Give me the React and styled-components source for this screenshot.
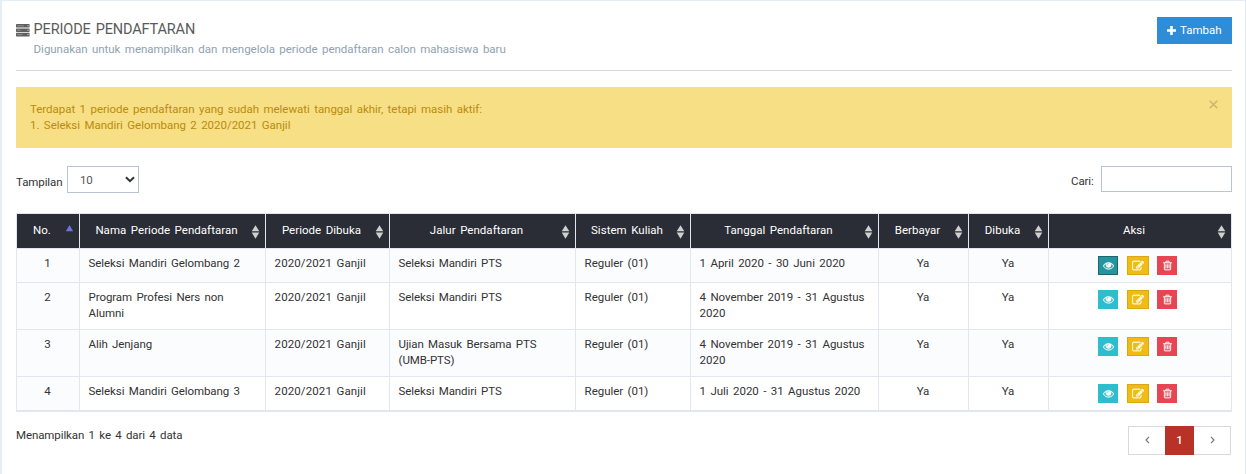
import React from 'react';
import styled, { createGlobalStyle, css } from 'styled-components';

const Global = createGlobalStyle`
  *, *::before, *::after { box-sizing: border-box; }
  body {
    margin: 0;
    background: #e5edf7;
    color: #333;
    font: 400 11.5px/16px Roboto, "Liberation Sans", sans-serif;
    letter-spacing: -.1px;
    word-spacing: 1.6px;
  }
`;

const Panel = styled.main`
  height: 473px;
  margin: 1px 1px 0 2px;
  padding: 14px 13px 0 14px;
  background: #fff;
`;

const Header = styled.header`
  display: flex;
  justify-content: space-between;
  align-items: flex-start;
  height: 56px;
  border-bottom: 1px solid #d8d8d8;
`;

const Heading = styled.div`
  display: grid;
  grid-template-columns: 17.6px auto;
  align-items: center;

  > svg { margin-top: 2px; }
`;

const Title = styled.h1`
  margin: 1px 0 0;
  color: #5a5a5a;
  font-size: 14.5px;
  font-weight: 400;
  line-height: 28px;
  letter-spacing: -.14px;
  white-space: nowrap;
`;

const Subtitle = styled.p`
  grid-column: 2;
  margin: -3px 0 0;
  color: #8fa2b1;
  letter-spacing: -.03px;
  white-space: nowrap;
`;

const AddButton = styled.button`
  display: flex;
  align-items: center;
  gap: 4px;
  width: 75px;
  height: 27px;
  margin-top: 2px;
  padding: 0 0 1px 10px;
  border: 0;
  background: #2f8dd8;
  color: #fff;
  font: inherit;
  letter-spacing: 0;
`;

const Alert = styled.section`
  display: flex;
  justify-content: space-between;
  height: 61px;
  margin-top: 16px;
  padding: 14px 14px 0;
  background: #f7df86;
  color: #b98c0b;
  p { margin: 0; letter-spacing: -.03px; }
`;

const Close = styled.button`
  width: 9px;
  height: 9px;
  margin-top: -1px;
  padding: 0;
  border: 0;
  background: none;
  color: #c9b56d;
  svg { display: block; }
`;

const Controls = styled.div`
  display: flex;
  justify-content: space-between;
  height: 47px;
  margin-top: 18px;
`;

const Field = styled.label`
  display: flex;
  align-items: flex-start;
  > span { width: ${(p) => p.$label}; margin-top: ${(p) => p.$drop}; }
`;

const Select = styled.div`
  display: flex;
  align-items: center;
  justify-content: space-between;
  width: 72px;
  height: 27px;
  padding: 0 3px 0 12px;
  border: 1px solid #bac4d5;
  color: #555;
  svg { color: #333; }
`;

const Input = styled.input`
  width: 131px;
  height: 26px;
  border: 1px solid #bac4d5;
  background: #fff;
  outline: 0;
`;

const Table = styled.table`
  width: 1216px;
  table-layout: fixed;
  border-collapse: separate;
  border-spacing: 0;
  border: 1px solid #e2e7ef;
  border-right: 0;
`;

const HeadCell = styled.th`
  height: 35px;
  padding: 0;
  border: solid #e2e7ef;
  border-width: 0 1px 1px 0;
  background: #2a2d35;
  color: #fff;
  font-weight: 400;
`;

const HeadInner = styled.div`
  display: flex;
  align-items: center;
  height: 34px;
  padding-right: 5px;
  span { flex: 1; padding-left: 2px; margin-top: -2px; letter-spacing: .03px; white-space: nowrap; }
  svg { flex: none; margin-top: 1px; }
`;

const Cell = styled.td`
  height: 34px;
  padding: 6px 8px 8px ${(p) => (p.$center ? '7px' : '8.6px')};
  vertical-align: top;
  border: solid #e2e7ef;
  border-width: 0 1px 1px 0;
  background: ${(p) => (p.$tint ? '#fbfcfe' : '#fff')};
  text-align: ${(p) => (p.$center ? 'center' : 'left')};
  letter-spacing: ${(p) => p.$track || '-.09px'};
  white-space: pre;
`;

const ActionCell = styled(Cell)`
  padding: 7px 0 0 49px;
`;

const Actions = styled.div`
  display: flex;
`;

const tones = {
  active: css`background: #24959f; border-color: #1a686f;`,
  view: css`background: #2dbdcc; border-color: #2dbdcc;`,
  edit: css`background: #f0bc13; border-color: #d9a90f; width: 22px; margin: 0 8px 0 9px;`,
  remove: css`background: #e64552; border-color: #e64552;`,
};

const ActionButton = styled.button`
  display: flex;
  align-items: center;
  justify-content: center;
  width: 20px;
  height: 19px;
  padding: 0;
  border: 1px solid;
  color: rgba(255, 255, 255, .95);
  ${(p) => tones[p.$tone]}
`;

const Footer = styled.footer`
  display: flex;
  justify-content: space-between;
  > span { margin-top: 15px; }
`;

const Pager = styled.nav`
  display: flex;
  height: 29px;
  margin: 14px 1px 0 0;
  border: 1px solid #d9d9d9;
`;

const PageButton = styled.button`
  display: flex;
  align-items: center;
  justify-content: center;
  width: 36px;
  padding: 0 0 2px;
  border: 0;
  background: #fff;
  color: #777;
  ${(p) => p.$current && css`
    width: 29px;
    margin: -1px 0;
    background: #b93227;
    color: #fff;
    font: 500 11.5px Roboto, sans-serif;
  `}
`;

const paths = {
  eye: 'M1664 960q-152-236-381-353 61 104 61 225 0 185-131.5 316.5t-316.5 131.5-316.5-131.5-131.5-316.5q0-121 61-225-229 117-381 353 133 205 333.5 326.5t434.5 121.5 434.5-121.5 333.5-326.5zm-720-384q0-20-14-34t-34-14q-125 0-214.5 89.5t-89.5 214.5q0 20 14 34t34 14 34-14 14-34q0-86 61-147t147-61q20 0 34-14t14-34zm848 384q0 34-20 69-140 230-376.5 368.5t-499.5 138.5-499.5-139-376.5-368q-20-35-20-69t20-69q140-229 376.5-368t499.5-139 499.5 139 376.5 368q20 35 20 69z',
  edit: 'M888 1184l116-116-152-152-116 116v56h96v96h56zm440-720q-16-16-33 1l-350 350q-17 17-1 33t33-1l350-350q17-17 1-33zm80 594v190q0 119-84.5 203.5t-203.5 84.5h-832q-119 0-203.5-84.5t-84.5-203.5v-832q0-119 84.5-203.5t203.5-84.5h832q63 0 117 25 15 7 18 23 3 17-9 29l-49 49q-14 14-32 8-23-6-45-6h-832q-66 0-113 47t-47 113v832q0 66 47 113t113 47h832q66 0 113-47t47-113v-126q0-13 9-22l64-64q15-15 35-7t20 29zm-96-738l288 288-672 672h-288v-288zm444 132l-92 92-288-288 92-92q28-28 68-28t68 28l152 152q28 28 28 68t-28 68z',
  trash: 'M704 736v576q0 14-9 23t-23 9h-64q-14 0-23-9t-9-23v-576q0-14 9-23t23-9h64q14 0 23 9t9 23zm256 0v576q0 14-9 23t-23 9h-64q-14 0-23-9t-9-23v-576q0-14 9-23t23-9h64q14 0 23 9t9 23zm256 0v576q0 14-9 23t-23 9h-64q-14 0-23-9t-9-23v-576q0-14 9-23t23-9h64q14 0 23 9t9 23zm128 724v-948h-896v948q0 22 7 40.5t14.5 27 10.5 8.5h832q3 0 10.5-8.5t14.5-27 7-40.5zm-672-1076h448l-48-117q-7-9-17-11h-317q-10 2-17 11zm928 32v64q0 14-9 23t-23 9h-96v948q0 83-47 143.5t-113 60.5h-832q-66 0-113-58.5t-47-141.5v-952h-96q-14 0-23-9t-9-23v-64q0-14 9-23t23-9h309l70-167q15-37 54-63t79-26h320q40 0 79 26t54 63l70 167h309q14 0 23 9t9 23z',
};

const Icon = ({ name, size = 11 }) => (
  <svg width={size} height={size} viewBox="0 0 1792 1792" fill="currentColor" stroke="currentColor" strokeWidth="40"><path d={paths[name]} /></svg>
);

const serverUnits = [
  { y: 0, mark: 7 },
  { y: 4.4, mark: 3.6 },
  { y: 8.8, mark: 5.6 },
];

const ServerIcon = () => (
  <svg width="14" height="13" viewBox="0 0 14 13">
    {serverUnits.map(({ y, mark }) => (
      <g key={y}>
        <rect x="0" y={y} width="13.6" height="3.6" rx=".7" fill="#5f5f5f" />
        <rect x="1" y={y + 1.3} width={mark} height="1" fill="#8f8f8f" />
        <rect x="11.4" y={y + 1.3} width="1.2" height="1" fill="#d0d0d0" />
      </g>
    ))}
  </svg>
);

const SortIcon = ({ ascending }) => (
  <svg width="9" height="14" viewBox="0 0 9 14">
    {ascending
      ? <path d="M4.5 0 8.2 6.2H.8Z" fill="#7072dc" />
      : <path d="M4.5 .2 8.3 6.2H.7ZM.7 7.6H8.3L4.5 13.8Z" fill="#cfcfcf" />}
  </svg>
);

const Chevron = ({ d, w, h, stroke = 1.2 }) => (
  <svg width={w} height={h} viewBox={`0 0 ${w} ${h}`} fill="none" stroke="currentColor" strokeWidth={stroke}><path d={d} /></svg>
);

const columns = [
  ['No.', 63], ['Nama Periode Pendaftaran', 186], ['Periode Dibuka', 124],
  ['Jalur Pendaftaran', 186], ['Sistem Kuliah', 115], ['Tanggal Pendaftaran', 188],
  ['Berbayar', 90], ['Dibuka', 80], ['Aksi', 183],
];

const rows = [
  ['Seleksi Mandiri Gelombang 2', 'Seleksi Mandiri PTS', '1 April 2020 - 30 Juni 2020'],
  ['Program Profesi Ners non\nAlumni', 'Seleksi Mandiri PTS', '4 November 2019 - 31 Agustus\n2020'],
  ['Alih Jenjang', 'Ujian Masuk Bersama PTS\n(UMB-PTS)', '4 November 2019 - 31 Agustus\n2020'],
  ['Seleksi Mandiri Gelombang 3', 'Seleksi Mandiri PTS', '1 Juli 2020 - 31 Agustus 2020'],
];

export default function App() {
  return (
    <>
      <Global />
      <Panel>
        <Header>
          <Heading>
            <ServerIcon />
            <Title>PERIODE PENDAFTARAN</Title>
            <Subtitle>Digunakan untuk menampilkan dan mengelola periode pendaftaran calon mahasiswa baru</Subtitle>
          </Heading>
          <AddButton>
            <svg width="9" height="9" viewBox="0 0 9 9"><path d="M3.2 0h2.6v3.2H9v2.6H5.8V9H3.2V5.8H0V3.2h3.2Z" fill="#fff" /></svg>
            Tambah
          </AddButton>
        </Header>
        <Alert>
          <div>
            <p>Terdapat 1 periode pendaftaran yang sudah melewati tanggal akhir, tetapi masih aktif:</p>
            <p>1. Seleksi Mandiri Gelombang 2 2020/2021 Ganjil</p>
          </div>
          <Close aria-label="Tutup"><Chevron w={9} h={9} d="M.7 .7 8.3 8.3M8.3 .7 .7 8.3" stroke={1.5} /></Close>
        </Alert>
        <Controls>
          <Field $label="51px" $drop="8px">
            <span>Tampilan</span>
            <Select>10<Chevron w={10} h={7} d="M1 1.2 5 5.2 9 1.2" stroke={2} /></Select>
          </Field>
          <Field $label="30px" $drop="7px">
            <span>Cari:</span>
            <Input />
          </Field>
        </Controls>
        <Table>
          <colgroup>{columns.map(([name, w]) => <col key={name} width={w} />)}</colgroup>
          <thead>
            <tr>
              {columns.map(([name], i) => (
                <HeadCell key={name}><HeadInner><span>{name}</span><SortIcon ascending={i === 0} /></HeadInner></HeadCell>
              ))}
            </tr>
          </thead>
          <tbody>
            {rows.map(([name, path, date], i) => {
              const tint = i % 2 === 0;
              return (
                <tr key={name}>
                  <Cell $tint $center>{i + 1}</Cell>
                  <Cell $tint={tint}>{name}</Cell>
                  <Cell $tint={tint} $track=".1px">2020/2021 Ganjil</Cell>
                  <Cell $tint={tint}>{path}</Cell>
                  <Cell $tint={tint} $track="-.03px">Reguler (01)</Cell>
                  <Cell $tint={tint} $track="-.03px">{date}</Cell>
                  <Cell $tint={tint} $center>Ya</Cell>
                  <Cell $tint={tint} $center>Ya</Cell>
                  <ActionCell $tint={tint}>
                    <Actions>
                      <ActionButton $tone={i === 0 ? 'active' : 'view'} aria-label="Lihat"><Icon name="eye" /></ActionButton>
                      <ActionButton $tone="edit" aria-label="Ubah"><Icon name="edit" size={12} /></ActionButton>
                      <ActionButton $tone="remove" aria-label="Hapus"><Icon name="trash" /></ActionButton>
                    </Actions>
                  </ActionCell>
                </tr>
              );
            })}
          </tbody>
        </Table>
        <Footer>
          <span>Menampilkan 1 ke 4 dari 4 data</span>
          <Pager>
            <PageButton aria-label="Sebelumnya"><Chevron w={5} h={8} d="M4 .8 1 4 4 7.2" /></PageButton>
            <PageButton $current>1</PageButton>
            <PageButton aria-label="Berikutnya"><Chevron w={5} h={8} d="M1 .8 4 4 1 7.2" /></PageButton>
          </Pager>
        </Footer>
      </Panel>
    </>
  );
}
